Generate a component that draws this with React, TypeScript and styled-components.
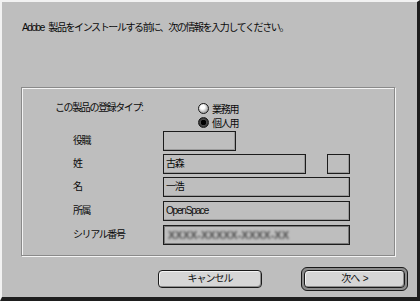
import React from "react";
import styled, { createGlobalStyle } from "styled-components";

const GlobalStyle = createGlobalStyle`
  html, body {
    margin: 0;
    padding: 0;
    background: #bebebe;
  }
  body {
    font-family: "Liberation Sans", "Noto Sans CJK JP", sans-serif;
    font-size: 10px;
    color: #0a0a0a;
  }
`;

export default function App(): JSX.Element {
  return (
    <>
      <GlobalStyle />
      <Window>
        <Intro>Adobe 製品をインストールする前に、次の情報を入力してください。</Intro>
        <GroupBox>
          <TypeRow>
            <Label $indent={33}>この製品の登録タイプ:</Label>
            <RadioGroup>
              <RadioItem>
                <RadioDot $checked={false} />
                <span>業務用</span>
              </RadioItem>
              <RadioItem>
                <RadioDot $checked={true} />
                <span>個人用</span>
              </RadioItem>
            </RadioGroup>
          </TypeRow>
          <FieldRow $top={2}>
            <Label $indent={51}>役職</Label>
            <Field $width={73} />
          </FieldRow>
          <FieldRow $top={3}>
            <Label $indent={51}>姓</Label>
            <Field $width={143}>古森</Field>
            <Field $width={23} $gap={21} />
          </FieldRow>
          <FieldRow $top={3}>
            <Label $indent={51}>名</Label>
            <Field $width={187}>一浩</Field>
          </FieldRow>
          <FieldRow $top={4}>
            <Label $indent={51}>所属</Label>
            <Field $width={187}>OpenSpace</Field>
          </FieldRow>
          <FieldRow $top={4}>
            <Label $indent={51}>シリアル番号</Label>
            <Field $width={187} $locked>
              <Masked>XXXX-XXXXX-XXXX-XX</Masked>
            </Field>
          </FieldRow>
        </GroupBox>
        <ButtonRow>
          <Button $width={104}>キャンセル</Button>
          <DefaultFrame>
            <Button $width={101}>次へ&nbsp;&nbsp;&gt;</Button>
          </DefaultFrame>
        </ButtonRow>
      </Window>
    </>
  );
}

const Window = styled.div`
  width: 420px;
  height: 301px;
  box-sizing: border-box;
  border-style: solid;
  border-width: 2px 3px 4px 2px;
  border-color: #f2f2f2 #1e1e1e #1e1e1e #f2f2f2;
  background: #bebebe;
  display: flex;
  flex-direction: column;
`;
const Intro = styled.div`
  margin: 19px 0 0 20px;
  height: 14px;
  line-height: 14px;
  letter-spacing: -1.4px;
  word-spacing: 3px;
  white-space: nowrap;
`;
const GroupBox = styled.div`
  margin: 52px 0 0 19px;
  width: 374px;
  height: 169px;
  box-sizing: border-box;
  border: 1px solid #8a8a8a;
  box-shadow: inset 1px 1px 0 #f4f4f4, 1px 1px 0 #f4f4f4;
  padding-top: 13px;
  display: flex;
  flex-direction: column;
`;
const TypeRow = styled.div`
  display: grid;
  grid-template-columns: 176px auto;
  align-items: start;
`;
const Label = styled.div<{ $indent: number }>`
  padding-left: ${({ $indent }) => $indent}px;
  height: 14px;
  line-height: 14px;
  letter-spacing: -1.4px;
  white-space: nowrap;
`;
const RadioGroup = styled.div`
  display: flex;
  flex-direction: column;
`;
const RadioItem = styled.div`
  display: flex;
  align-items: center;
  gap: 3px;
  height: 14px;
  letter-spacing: -1.2px;
`;
const RadioDot = styled.span<{ $checked: boolean }>`
  width: 11px;
  height: 11px;
  box-sizing: border-box;
  border-radius: 50%;
  border: 1px solid #1a1a1a;
  background: ${({ $checked }) =>
    $checked
      ? "radial-gradient(circle at 50% 50%, #000 0 2.6px, #4a4a4a 3px, #2a2a2a 5px)"
      : "radial-gradient(circle at 40% 35%, #fff 0 2px, #e6e6e6 3px, #9a9a9a 6px)"};
`;
const FieldRow = styled.div<{ $top: number }>`
  margin-top: ${({ $top }) => $top}px;
  display: grid;
  grid-template-columns: 141px auto auto;
  justify-content: start;
  align-items: center;
  height: 20px;
`;
const Field = styled.div<{ $width: number; $gap?: number; $locked?: boolean }>`
  width: ${({ $width }) => $width}px;
  height: 20px;
  margin-left: ${({ $gap }) => $gap ?? 0}px;
  box-sizing: border-box;
  border: 1px solid #1c1c1c;
  box-shadow: ${({ $locked }) =>
    $locked ? "inset 1px 1px 0 #7a7a7a, inset -1px -1px 0 #7a7a7a" : "inset -1px -1px 0 #9a9a9a"};
  padding-left: 2px;
  line-height: 18px;
  letter-spacing: -1.2px;
  white-space: nowrap;
  overflow: hidden;
`;
const Masked = styled.span`
  display: inline-block;
  margin-left: 2px;
  color: #4e4e4e;
  font-size: 11px;
  font-weight: bold;
  letter-spacing: 0;
  filter: blur(0.8px);
`;
const ButtonRow = styled.div`
  margin: 11px 0 0 156px;
  display: flex;
  align-items: center;
  gap: 39px;
`;
const Button = styled.button<{ $width: number }>`
  width: ${({ $width }) => $width}px;
  height: 18px;
  box-sizing: border-box;
  border: 1px solid #1a1a1a;
  border-radius: 4px;
  background: #d6d6d6;
  box-shadow: inset 1px 1px 0 #f2f2f2, inset -1px -1px 0 #8e8e8e;
  font: inherit;
  color: #111;
  letter-spacing: -1px;
  padding: 0;
  line-height: 16px;
`;
const DefaultFrame = styled.div`
  display: flex;
  box-sizing: border-box;
  border: 1px solid #1a1a1a;
  border-radius: 6px;
  padding: 2px;
  background: #8c8c8c;
`;
